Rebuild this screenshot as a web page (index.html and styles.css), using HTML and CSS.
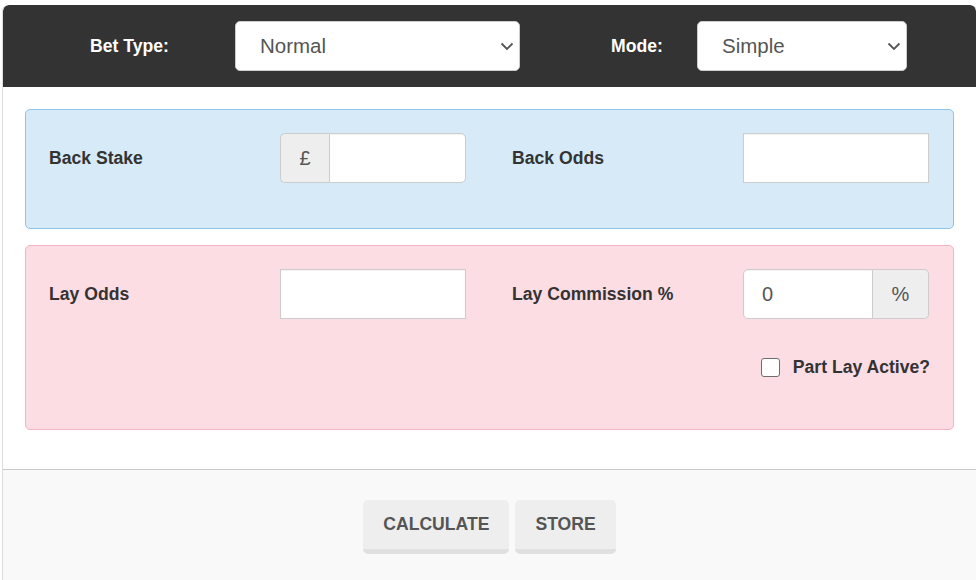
FILE: index.html
```html
<!DOCTYPE html>
<html>
<head>
<meta charset="utf-8">
<link rel="stylesheet" href="styles.css">
</head>
<body>
<div class="calc">
  <div class="topbar">
    <label class="top-label first">Bet Type:</label>
    <div class="select-wrap wide">
      <select class="top-select"><option>Normal</option></select>
      <svg class="chevron" width="14" height="9" viewBox="0 0 14 9"><path d="M1.5 1.5 L7 7 L12.5 1.5" fill="none" stroke="#555" stroke-width="1.8"/></svg>
    </div>
    <label class="top-label second">Mode:</label>
    <div class="select-wrap narrow">
      <select class="top-select"><option>Simple</option></select>
      <svg class="chevron" width="14" height="9" viewBox="0 0 14 9"><path d="M1.5 1.5 L7 7 L12.5 1.5" fill="none" stroke="#555" stroke-width="1.8"/></svg>
    </div>
  </div>
  <div class="main">
    <div class="panel back">
      <div class="row">
        <div class="field-label">Back Stake</div>
        <div class="input-group">
          <span class="addon addon-left">£</span>
          <input class="control grouped-right" type="text">
        </div>
        <div class="field-label second-col">Back Odds</div>
        <input class="control plain" type="text">
      </div>
    </div>
    <div class="panel lay">
      <div class="row">
        <div class="field-label">Lay Odds</div>
        <input class="control plain" type="text">
        <div class="field-label second-col">Lay Commission %</div>
        <div class="input-group">
          <input class="control grouped-left" type="text" value="0">
          <span class="addon addon-right">%</span>
        </div>
      </div>
      <div class="check-row">
        <span class="checkbox"></span>
        <span class="check-label">Part Lay Active?</span>
      </div>
    </div>
  </div>
  <div class="footer">
    <button class="btn">CALCULATE</button>
    <button class="btn">STORE</button>
  </div>
</div>
</body>
</html>
```
FILE: styles.css
```css
html, body {
  margin: 0;
  padding: 0;
  background: #ffffff;
  font-family: "Liberation Sans", Arial, sans-serif;
  color: #333333;
}

.calc {
  margin: 5px 0 0 2px;
  width: 973px;
  border-left: 1px solid #dddddd;
  border-right: 1px solid #dddddd;
  border-radius: 6px 6px 0 0;
  overflow: hidden;
  height: 575px;
  display: flex;
  flex-direction: column;
}

.topbar {
  background: #333333;
  height: 82px;
  display: flex;
  align-items: center;
  border-radius: 6px 6px 0 0;
}

.top-label {
  color: #ffffff;
  font-weight: bold;
  font-size: 17.6px;
  box-sizing: border-box;
}

.top-label.first {
  width: 232px;
  padding-left: 87px;
}

.top-label.second {
  width: 177px;
  padding-left: 91px;
}

.select-wrap {
  height: 50px;
  position: relative;
}

.select-wrap.wide { width: 285px; }
.select-wrap.narrow { width: 210px; }

.top-select {
  width: 100%;
  height: 50px;
  box-sizing: border-box;
  border: 1px solid #cccccc;
  border-radius: 5px;
  background: #ffffff;
  color: #555555;
  font-family: "Liberation Sans", Arial, sans-serif;
  font-size: 20.5px;
  padding: 0 30px 0 24px;
  -webkit-appearance: none;
  appearance: none;
  line-height: 48px;
}

.chevron {
  position: absolute;
  right: 6px;
  top: 21px;
  pointer-events: none;
}

.main {
  flex: 0 0 auto;
  height: 382px;
  padding: 22px 22px 0 22px;
  box-sizing: border-box;
  display: flex;
  flex-direction: column;
  gap: 16px;
}

.panel {
  border-radius: 5px;
  padding: 23px 23px 0 23px;
  box-sizing: border-box;
}

.panel.back {
  background: #d6eaf8;
  border: 1px solid #8cc4ea;
  height: 120px;
}

.panel.lay {
  background: #fcdde3;
  border: 1px solid #f6b3c1;
  height: 185px;
}

.row {
  display: grid;
  grid-template-columns: 231px 186px 277px 186px;
  align-items: center;
  height: 50px;
}

.field-label {
  font-weight: bold;
  font-size: 17.6px;
  color: #333333;
}

.field-label.second-col {
  padding-left: 46px;
}

.input-group {
  display: flex;
  height: 50px;
}

.control {
  height: 50px;
  box-sizing: border-box;
  border: 1px solid #cccccc;
  background: #ffffff;
  font-family: "Liberation Sans", Arial, sans-serif;
  font-size: 20px;
  color: #555555;
  padding: 0 18px;
  margin: 0;
  outline: none;
  box-shadow: inset 0 1px 1px rgba(0, 0, 0, 0.05);
}

.control.plain {
  width: 186px;
  border-radius: 0;
}

.control.grouped-right {
  width: 137px;
  border-radius: 0 5px 5px 0;
}

.control.grouped-left {
  width: 130px;
  border-radius: 5px 0 0 5px;
}

.addon {
  background: #eeeeee;
  border: 1px solid #cccccc;
  color: #555555;
  font-size: 20px;
  display: flex;
  align-items: center;
  justify-content: center;
  box-sizing: border-box;
  height: 50px;
}

.addon-left {
  width: 49px;
  border-right: none;
  border-radius: 5px 0 0 5px;
}

.addon-right {
  width: 56px;
  border-left: none;
  border-radius: 0 5px 5px 0;
}

.check-row {
  display: flex;
  justify-content: flex-end;
  align-items: center;
  gap: 13px;
  margin-top: 37px;
  height: 22px;
}

.checkbox {
  width: 19px;
  height: 19px;
  box-sizing: border-box;
  border: 1.5px solid #6d6d6d;
  border-radius: 3px;
  background: #ffffff;
}

.check-label {
  font-weight: bold;
  font-size: 17.6px;
  color: #333333;
}

.footer {
  flex: 1;
  background: #f9f9f9;
  border-top: 1px solid #c8c8c8;
  display: flex;
  justify-content: center;
  align-items: flex-start;
  gap: 6px;
  padding-top: 30px;
}

.btn {
  background: #eeeeee;
  border: none;
  border-bottom: 5px solid #e0e0e0;
  border-radius: 5px;
  height: 54px;
  padding: 0 20px;
  font-family: "Liberation Sans", Arial, sans-serif;
  font-weight: bold;
  font-size: 17.6px;
  color: #555555;
}
```
